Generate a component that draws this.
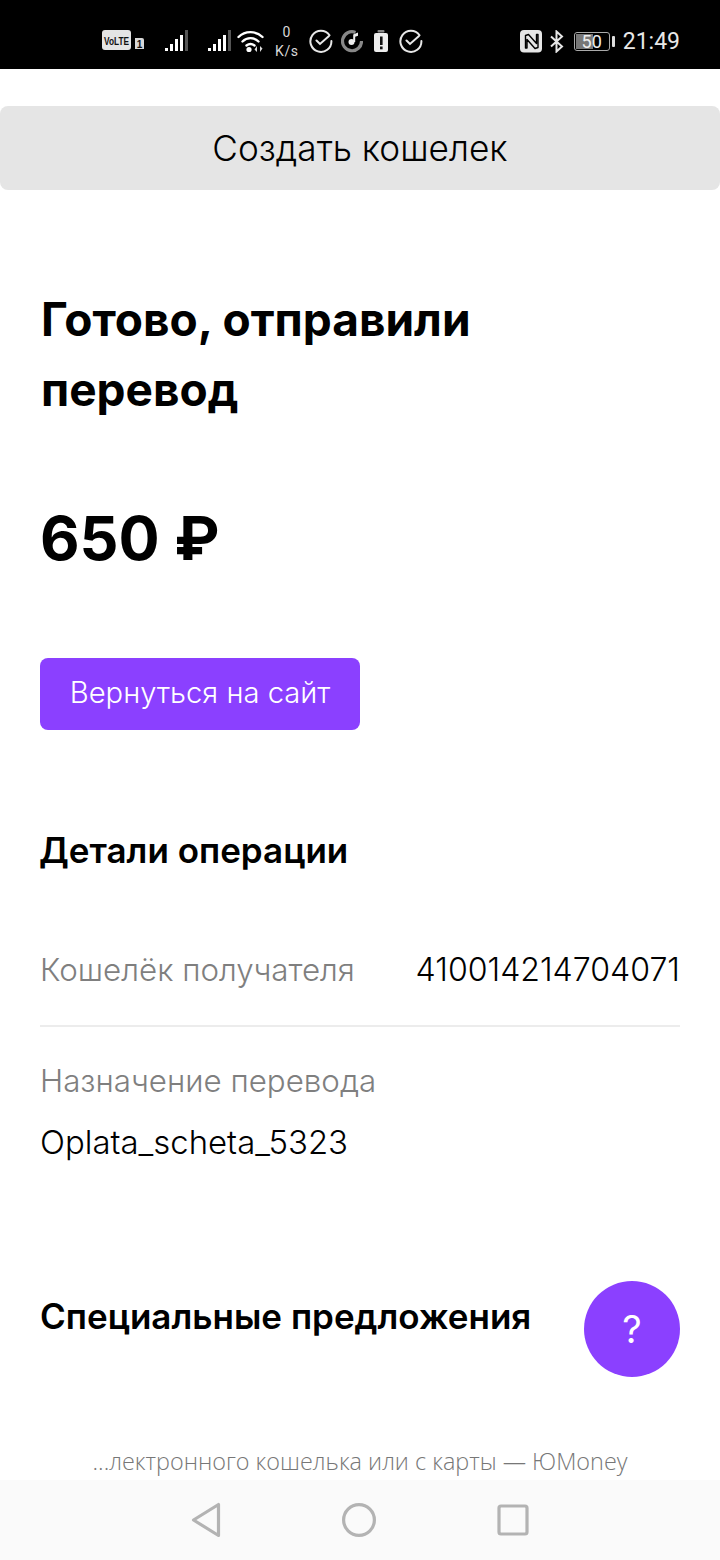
<div class="phone">
  <header class="status">
    <div class="status-left">
      <svg class="ic" width="44" height="22" viewBox="0 0 44 22"><rect x="0" y="0" width="29" height="20" rx="3" fill="#e4e4e4"/><text x="14.500" y="14.500" class="volte" textLength="25" lengthAdjust="spacingAndGlyphs">VoLTE</text><path d="M33 8h7a2 2 0 0 1 2 2v9h-9z" fill="#d8d8d8"/><text x="37.500" y="18" class="sim">1</text></svg>
      <svg class="ic sig1" width="24" height="22" viewBox="0 0 24 22"><g fill="#fff"><rect x="0" y="18" width="3" height="3"/><rect x="5" y="14" width="3" height="7"/><rect x="10" y="9" width="3" height="12"/><rect x="15" y="5" width="3" height="16"/></g><rect x="20" y="0" width="3" height="21" fill="#555"/></svg>
      <svg class="ic sig2" width="24" height="22" viewBox="0 0 24 22"><g fill="#fff"><rect x="0" y="18" width="3" height="3"/><rect x="5" y="14" width="3" height="7"/><rect x="10" y="9" width="3" height="12"/><rect x="15" y="5" width="3" height="16"/></g><rect x="20" y="0" width="3" height="21" fill="#555"/></svg>
      <svg class="ic wifi" width="28" height="24" viewBox="0 0 28 24"><g fill="none" stroke="#fff" stroke-width="2.400" stroke-linecap="round"><path d="M1.500 8C8 1.500 19 1.500 25.500 8"/><path d="M5.500 12.500C10 8 17 8 21.500 12.500"/><path d="M9.500 16.500C12 14.500 15 14.500 17.500 16.500"/></g><circle cx="12" cy="20.500" r="2.600" fill="#fff"/><path d="M20 17v6l-2.500-2.500zM23 23v-6l2.500 2.500z" fill="#ddd"/></svg>
      <div class="speed"><span>0</span><span>K/s</span></div>
      <svg class="ic ok1" width="24" height="24" viewBox="0 0 24 24"><path d="M20.500 6.300A10.500 10.500 0 1 0 22.400 12M7.500 11.500l3.500 3.500 9-8" fill="none" stroke="#e8e8e8" stroke-width="2" stroke-linecap="round"/></svg>
      <svg class="ic music" width="22" height="24" viewBox="0 0 22 24"><path d="M14.500 3.400A9.500 9.500 0 1 0 20.500 12" fill="none" stroke="#888" stroke-width="3.200"/><circle cx="10.500" cy="13" r="3" fill="#eee"/><path d="M12.200 13V5.500l4.800-2v3.200l-2.800 1V13z" fill="#eee"/></svg>
      <svg class="ic warn" width="16" height="24" viewBox="0 0 16 24"><rect x="4.500" y="1" width="7" height="2.500" rx="1" fill="#888"/><rect x="1" y="4" width="14" height="19" rx="2" fill="#eee"/><rect x="7" y="7.500" width="2.600" height="8.500" fill="#111"/><rect x="7" y="17.500" width="2.600" height="2.800" fill="#111"/></svg>
      <svg class="ic ok2" width="24" height="24" viewBox="0 0 24 24"><path d="M20.500 6.300A10.500 10.500 0 1 0 22.400 12M7.500 11.500l3.500 3.500 9-8" fill="none" stroke="#e8e8e8" stroke-width="2" stroke-linecap="round"/></svg>
    </div>
    <div class="status-right">
      <svg class="ic" width="22" height="23" viewBox="0 0 22 23"><rect width="22" height="22.500" rx="4" fill="#e6e6e6"/><path d="M5.500 5.500l3-1 8 9V4.500h1.500v13l-3 1-8-9v8.500H5.500z" fill="none" stroke="#000" stroke-width="1.400" stroke-linejoin="round"/></svg>
      <svg class="ic bt" width="14" height="23" viewBox="0 0 14 23"><path d="M1 6.500l11 10-5.500 5V1.500l5.500 5-11 10" fill="none" stroke="#e6e6e6" stroke-width="2"/></svg>
      <div class="batt-wrap">
        <div class="batt"><div class="batt-fill"></div><span>50</span></div>
        <i class="batt-tip"></i>
      </div>
      <span class="clock">21:49</span>
    </div>
  </header>

  <main class="content">
    <button class="create">Создать кошелек</button>
    <section class="body">
      <h1>Готово, отправили<br />перевод</h1>
      <div class="amount">650 ₽</div>
      <button class="back">Вернуться на сайт</button>
      <h2 class="details-title">Детали операции</h2>
      <div class="row">
        <span class="label">Кошелёк получателя</span>
        <span class="value">410014214704071</span>
      </div>
      <div class="purpose">
        <div class="label">Назначение перевода</div>
        <div class="value mono">Oplata_scheta_5323</div>
      </div>
      <h2 class="offers">Специальные предложения</h2>
    </section>
    <div class="fab">?</div>
    <div class="tab-title">...лектронного кошелька или с карты — ЮMoney</div>
  </main>

  <nav class="navbar">
    <svg width="30" height="36" viewBox="0 0 30 36"><path d="M27.500 2.500v31L2.500 18z" fill="none" stroke="#b3b3b3" stroke-width="3.200" stroke-linejoin="round"/></svg>
    <svg width="34" height="34" viewBox="0 0 34 34"><circle cx="17" cy="17" r="15.400" fill="none" stroke="#b3b3b3" stroke-width="3.200"/></svg>
    <svg width="32" height="32" viewBox="0 0 32 32"><rect x="2" y="2" width="28" height="28" rx="2" fill="none" stroke="#b3b3b3" stroke-width="3.200"/></svg>
  </nav>
</div>

<style>
  :global(body) { margin: 0; background: #fff; }
  .phone {
    width: 720px; height: 1560px; display: flex; flex-direction: column;
    overflow: hidden; font-family: "Inter", "Liberation Sans", sans-serif; color: #000;
  }
  .status {
    height: 69px; background: #000; flex: none; display: flex; align-items: center;
    justify-content: space-between; padding: 13px 40px 0 102px; box-sizing: border-box; color: #eee;
  }
  .status-left, .status-right { display: flex; align-items: center; }
  .ic { display: block; flex: none; }
  .volte { font: 700 10px "Liberation Sans", sans-serif; fill: #111; text-anchor: middle; }
  .sim { font: 700 10px "Liberation Sans", sans-serif; fill: #111; text-anchor: middle; }
  .sig1 { margin-left: 19px; }
  .sig2 { margin-left: 19px; }
  .wifi { margin-left: 5px; }
  .speed {
    display: flex; flex-direction: column; align-items: center; font: 14px/19px "Roboto", sans-serif;
    color: #d8d8d8; margin: 2px 0 0 10px; letter-spacing: .6px;
  }
  .ok1 { margin-left: 10px; }
  .music { margin-left: 8px; }
  .warn { margin-left: 10px; }
  .ok2 { margin-left: 10px; }
  .bt { margin-left: 8px; }
  .batt-wrap { display: flex; align-items: center; gap: 2px; margin-left: 10px; }
  .batt {
    position: relative; width: 36px; height: 19px; box-sizing: border-box; border: 1.500px solid #aaa; border-radius: 3px;
    display: flex; align-items: center; justify-content: center; overflow: hidden;
  }
  .batt-fill { position: absolute; left: 1px; top: 1px; bottom: 1px; width: 17px; background: #777; }
  .batt span { position: relative; font: 18px "Roboto", sans-serif; color: #eee; }
  .batt-tip { display: block; width: 3px; height: 11px; background: #ddd; border-radius: 1px; }
  .clock { font: 23px "Roboto", sans-serif; color: #e8e8e8; margin-left: 8px; }

  .content { flex: 1; position: relative; display: flex; flex-direction: column; overflow: hidden; }
  button { border: 0; font: inherit; padding: 0; display: block; }
  .create {
    margin-top: 37px; height: 84px; width: 100%; flex: none; background: #e5e5e5; border-radius: 8px;
    font: 300 35.200px "Inter", sans-serif; color: #000;
  }
  .body { padding: 0 40px; display: flex; flex-direction: column; flex: 1; }
  h1 { margin: 94px 0 0; font-size: 46px; line-height: 70px; font-weight: 700; padding-left: 1px; }
  .amount { margin-top: 74px; font-size: 61px; line-height: 80px; font-weight: 700; }
  .back {
    margin-top: 80px; width: 320px; height: 72px; padding-bottom: 3px; background: #8b40ff; border-radius: 8px;
    color: #fff; font-size: 29.200px; font-weight: 300; flex: none;
  }
  h2 { margin: 0; font-size: 35px; line-height: 44px; font-weight: 600; }
  .details-title { margin-top: 98px; margin-left: -1px; }
  .row {
    margin-top: 78px; height: 77px; box-sizing: border-box; display: flex; justify-content: space-between;
    border-bottom: 2px solid #ececec; align-items: flex-start; padding-top: 0;
  }
  .label { color: #7f7f7f; font-size: 31.300px; line-height: 40px; font-weight: 300; }
  .value { font-size: 32.100px; line-height: 40px; color: #000; font-weight: 300; }
  .purpose { margin-top: 34px; }
  .mono { margin-top: 21px; font-size: 32.900px; }
  .offers { margin-top: 132px; }
  .fab {
    position: absolute; left: 584px; top: 1212px; width: 96px; height: 96px; border-radius: 50%;
    background: #8b40ff; color: #fff; font-size: 38px; font-weight: 400;
    display: flex; align-items: center; justify-content: center;
  }
  .tab-title {
    position: absolute; left: 0; right: 0; bottom: 1px; height: 36px; text-align: center;
    font: 300 23.400px/36px "Open Sans", sans-serif; color: #777;
  }
  .navbar {
    height: 80px; flex: none; background: #fafafa; display: flex; align-items: center;
    box-sizing: border-box; padding-left: 191px; gap: 121px;
  }
</style>
